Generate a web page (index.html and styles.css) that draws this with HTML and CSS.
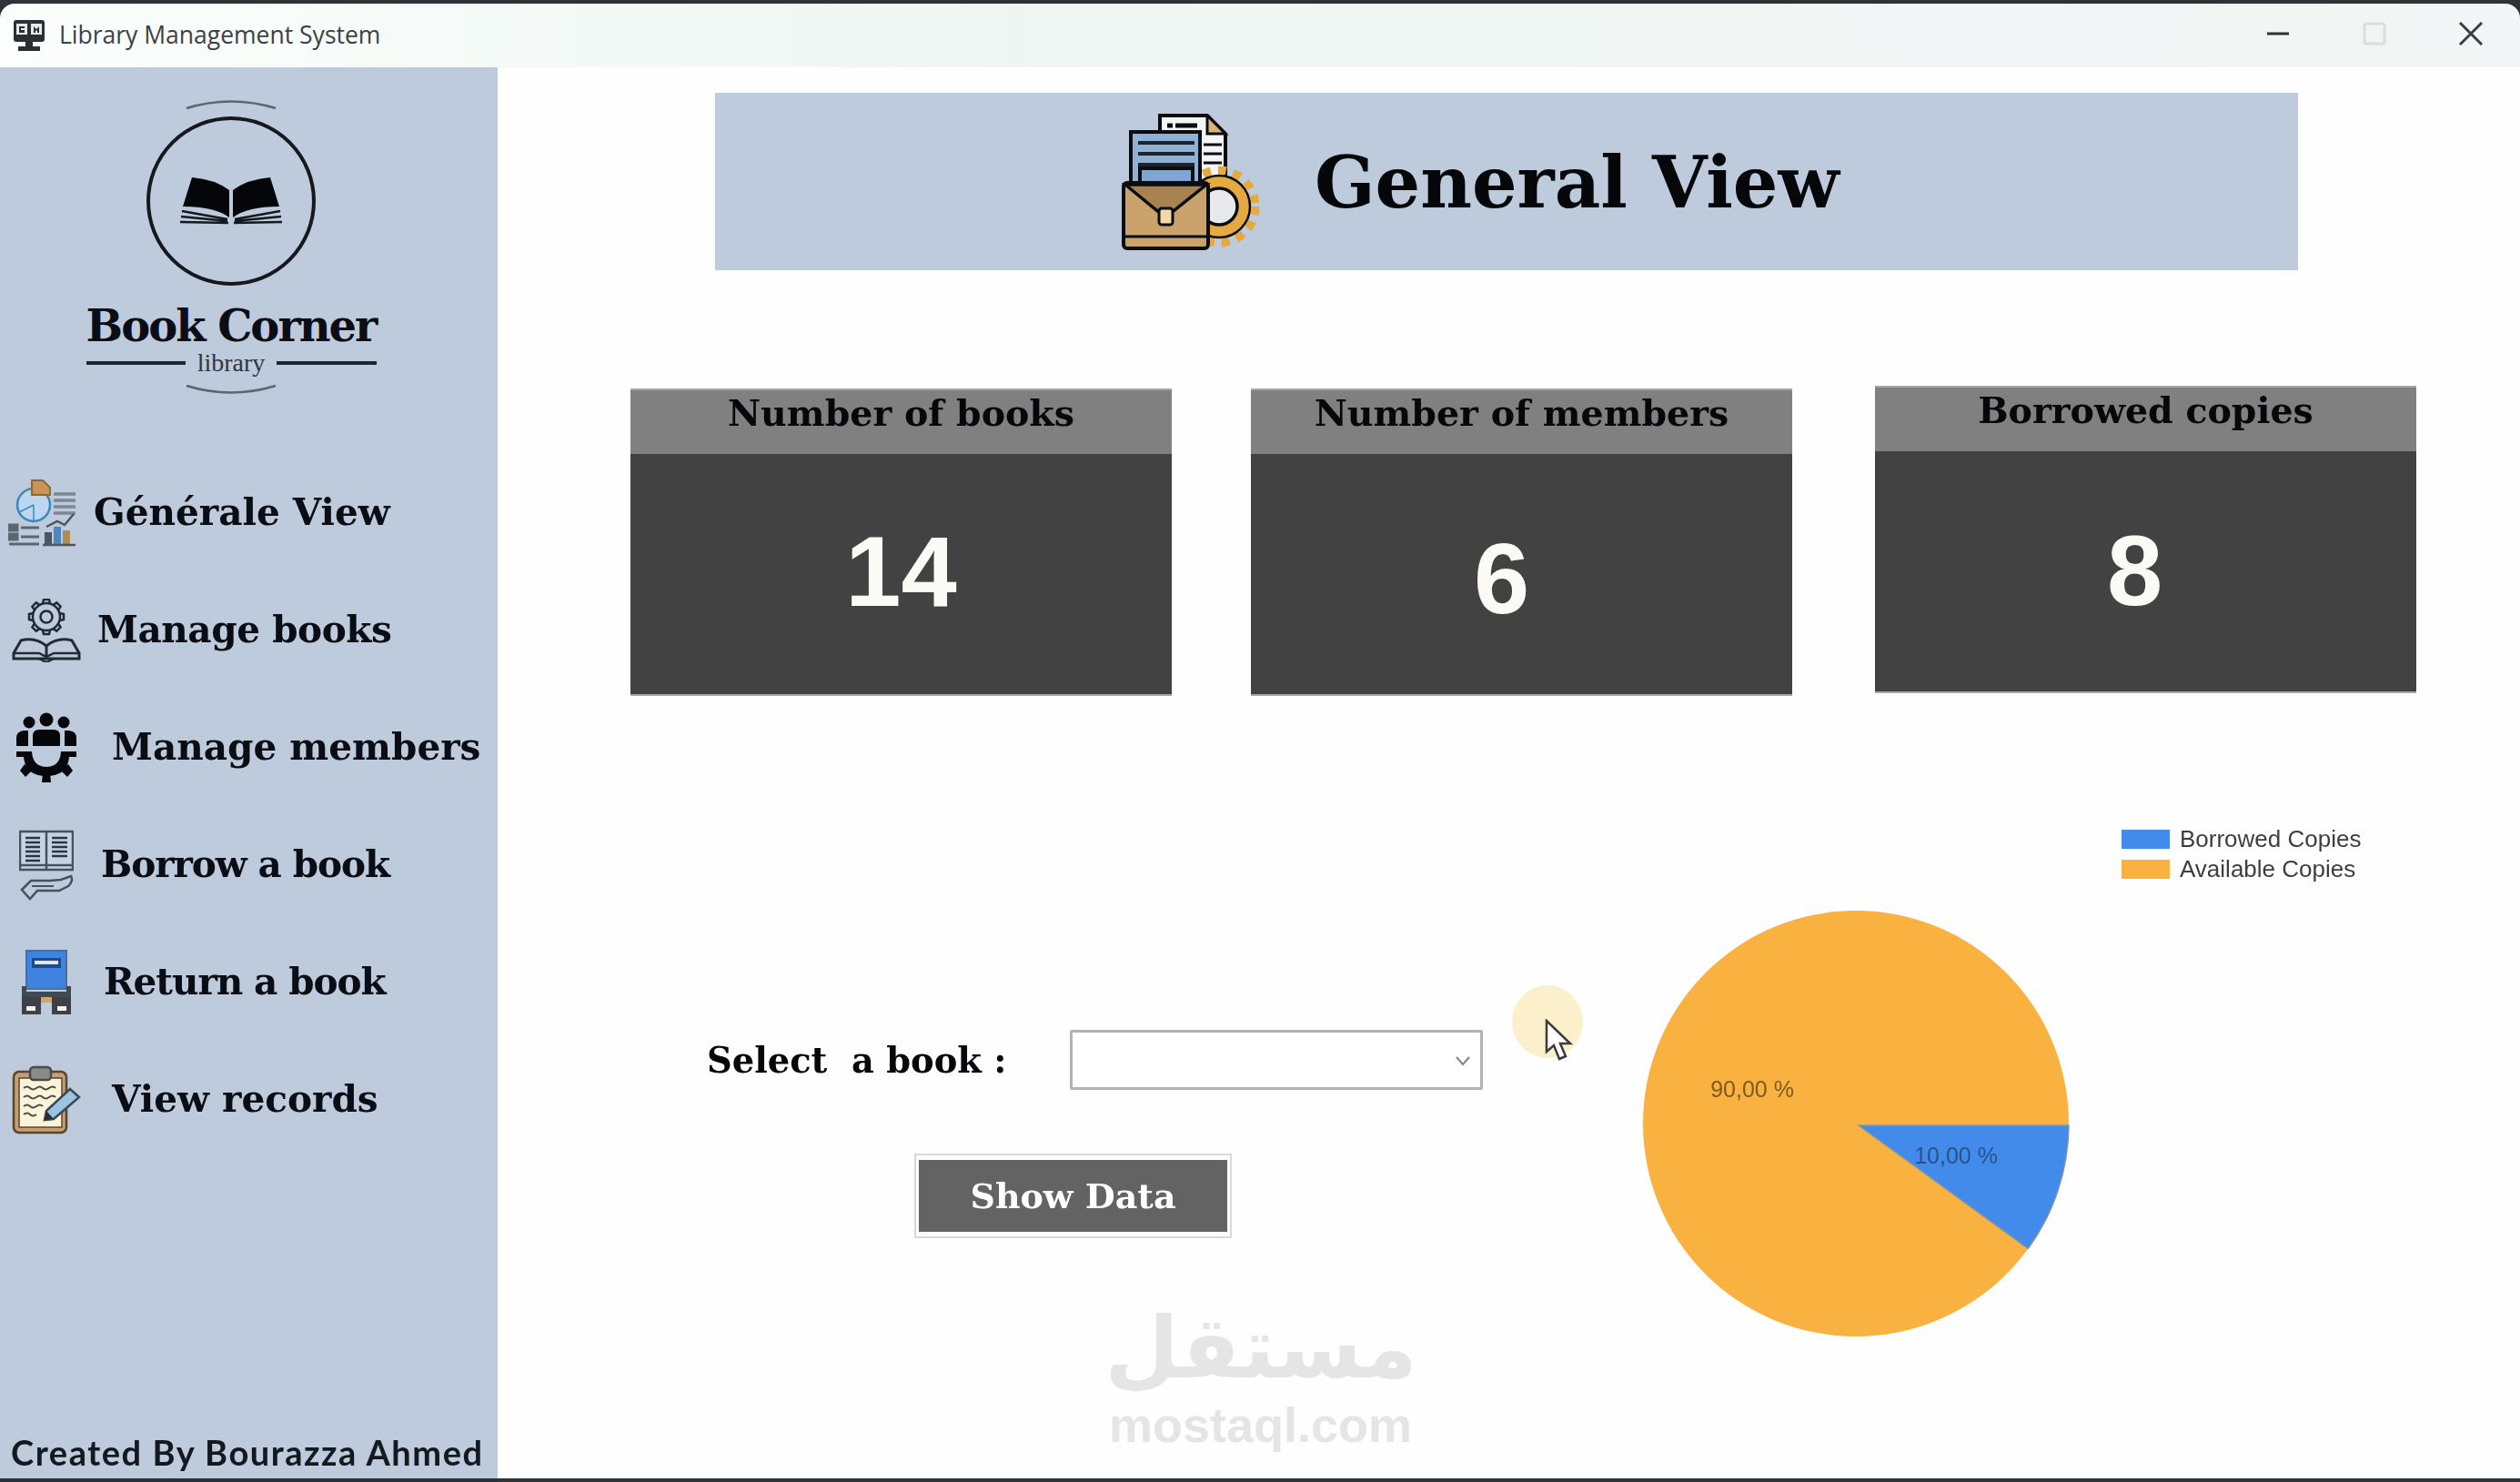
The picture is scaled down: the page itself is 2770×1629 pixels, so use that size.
FILE: index.html
```html
<!DOCTYPE html>
<html lang="en">
<head>
<meta charset="utf-8">
<title>Library Management System</title>
<link rel="stylesheet" href="styles.css">
</head>
<body>
<div class="window">
  <header class="titlebar">
    <svg class="app-icon" viewBox="0 0 36 36" width="36" height="36">
      <rect x="1" y="1" width="34" height="24" rx="3" fill="#2b2f36"/>
      <rect x="4" y="5" width="12" height="12" fill="#e8e8e8"/>
      <rect x="20" y="5" width="12" height="12" fill="#e8e8e8"/>
      <path d="M7 8h6v2H9v2h4v3H7zM23 8l3 3 3-3v7h-2v-3l-1 1-1-1v3h-2z" fill="#2b2f36"/>
      <rect x="14" y="25" width="8" height="6" fill="#2b2f36"/>
      <rect x="6" y="30" width="24" height="5" fill="#2b2f36"/>
    </svg>
    <span class="app-title">Library Management System</span>
    <div class="win-controls">
      <svg class="win-btn" viewBox="0 0 60 30" width="60" height="30"><path d="M18 15H42" stroke="#2b2f36" stroke-width="3"/></svg>
      <svg class="win-btn" viewBox="0 0 60 30" width="60" height="30"><rect x="19" y="4" width="22" height="22" rx="2" fill="none" stroke="#dcdddd" stroke-width="3"/></svg>
      <svg class="win-btn" viewBox="0 0 60 30" width="60" height="30"><path d="M18 3L42 27M42 3L18 27" stroke="#3a3d42" stroke-width="3"/></svg>
    </div>
  </header>

  <div class="content">
    <aside class="sidebar">
      <div class="brand">
        <svg class="brand-mark" viewBox="0 0 200 216" width="200" height="216">
          <path d="M51 14Q100 -1 149 14" fill="none" stroke="#5b6672" stroke-width="2.5"/>
          <circle cx="100" cy="116" r="91" fill="none" stroke="#15181d" stroke-width="4"/>
          <path d="M57 90Q82 92 98 104V134Q82 122 47 122Z" fill="#04060a"/>
          <path d="M143 90Q118 92 102 104V134Q118 122 153 122Z" fill="#04060a"/>
          <path d="M46 127L96 136M45 133L96 138M44 139L97 140M154 127L104 136M155 133L104 138M156 139L103 140" stroke="#15181d" stroke-width="2.5" fill="none"/>
        </svg>
        <div class="brand-name">Book Corner</div>
        <div class="brand-sub"><span class="brand-rule"></span><span class="brand-lib">library</span><span class="brand-rule"></span></div>
        <svg class="brand-arc" viewBox="0 0 100 14" width="100" height="14"><path d="M1 2Q50 17 99 2" fill="none" stroke="#5b6672" stroke-width="2.5"/></svg>
      </div>

      <nav class="nav">
        <a class="nav-row nav-general">
          <svg class="nav-icon" viewBox="0 0 74 74" width="74" height="74">
            <circle cx="28" cy="28" r="18" fill="#bcd8f0" stroke="#3f86bd" stroke-width="2.5"/>
            <path d="M28 28V46M28 28L12 36" stroke="#3f86bd" stroke-width="1.5"/>
            <path d="M26 1H38L46 9V17H26Z" fill="#c99555" stroke="#8a6a40" stroke-width="2"/>
            <path d="M50 16H74M50 23H74M50 30H74M50 37H74" stroke="#7c8791" stroke-width="3.5"/>
            <path d="M1 50H10V56H1ZM1 60H10V66H1ZM14 53H34M14 63H34M1 71H34" stroke="#5c6670" stroke-width="3" fill="#5c6670"/>
            <path d="M42 52L54 46L62 50L72 38" fill="none" stroke="#4c5661" stroke-width="2.5"/>
            <rect x="40" y="58" width="8" height="14" fill="#4c5661"/>
            <rect x="50" y="52" width="8" height="20" fill="#4f86bd"/>
            <rect x="60" y="56" width="8" height="16" fill="#b58b55"/>
            <path d="M38 72H74" stroke="#4c5661" stroke-width="2.5"/>
          </svg>
          <span class="nav-text">Générale View</span>
        </a>
        <a class="nav-row nav-books">
          <svg class="nav-icon" viewBox="0 0 76 70" width="76" height="70">
            <g fill="#bdcbdc" stroke="#222a33" stroke-width="2.5">
              <g id="tooth"><path d="M34 5L35 1H41L42 5"/></g>
              <use href="#tooth" transform="rotate(45 38 20)"/>
              <use href="#tooth" transform="rotate(90 38 20)"/>
              <use href="#tooth" transform="rotate(135 38 20)"/>
              <use href="#tooth" transform="rotate(180 38 20)"/>
              <use href="#tooth" transform="rotate(225 38 20)"/>
              <use href="#tooth" transform="rotate(270 38 20)"/>
              <use href="#tooth" transform="rotate(315 38 20)"/>
              <circle cx="38" cy="20" r="15"/>
              <circle cx="38" cy="20" r="6.5"/>
            </g>
            <path d="M38 52Q26 42 10 46L2 60V66H74V60L66 46Q50 42 38 52V66" fill="none" stroke="#222a33" stroke-width="3"/>
            <path d="M2 60H30L38 64L46 60H74M30 66L38 70L46 66" fill="none" stroke="#222a33" stroke-width="2.5"/>
          </svg>
          <span class="nav-text">Manage books</span>
        </a>
        <a class="nav-row nav-members">
          <svg class="nav-icon" viewBox="0 0 66 77" width="66" height="77">
            <g fill="#05070b">
              <circle cx="14" cy="11" r="6.5"/><circle cx="33" cy="8" r="7.5"/><circle cx="52" cy="11" r="6.5"/>
              <path d="M18 37V26Q18 19 25 19H41Q48 19 48 26V37Z"/>
              <path d="M0 37V28Q0 21 8 20H13V37ZM66 37V28Q66 21 58 20H53V37Z"/>
              <path d="M0 43H17Q18 60 33 60Q48 60 49 43H66V49H58Q56 70 33 70Q10 70 8 49H0Z"/>
              <path d="M29 66H37L38 77H28ZM9 57L17 64L10 71L4 64ZM57 57L49 64L56 71L62 64Z"/>
            </g>
          </svg>
          <span class="nav-text">Manage members</span>
        </a>
        <a class="nav-row nav-borrow">
          <svg class="nav-icon" viewBox="0 0 60 78" width="60" height="78">
            <path d="M1 2H59V44H1ZM30 2V44M1 39H59" fill="#c6d3e2" stroke="#47525e" stroke-width="2.5"/>
            <path d="M7 9H23M7 14H23M7 19H23M7 24H23M7 29H23M7 34H23M36 9H53M36 14H53M36 19H53M36 24H53M36 29H53" stroke="#2c3540" stroke-width="2.5"/>
            <path d="M3 66L13 56H34L46 55L57 51Q60 56 54 62L44 67H20L12 76Z" fill="none" stroke="#47525e" stroke-width="2.5"/>
            <path d="M14 62H38" stroke="#47525e" stroke-width="2"/>
          </svg>
          <span class="nav-text">Borrow a book</span>
        </a>
        <a class="nav-row nav-return">
          <svg class="nav-icon" viewBox="0 0 56 72" width="56" height="72">
            <rect x="6" y="1" width="44" height="42" fill="#3f83e0" stroke="#4a6f9c" stroke-width="2"/>
            <rect x="12" y="9" width="32" height="11" fill="#1f4c86"/>
            <path d="M15 14H41" stroke="#dfe9f5" stroke-width="4"/>
            <path d="M1 40H6V46H50V40H55V52H1Z" fill="#3f4a57"/>
            <rect x="8" y="52" width="40" height="6" fill="#d2a468"/>
            <path d="M1 52H22V71H1ZM34 52H55V71H34Z" fill="#3e4045"/>
            <path d="M6 62H16V67H6ZM40 62H50V67H40Z" fill="#f3f3f3"/>
          </svg>
          <span class="nav-text">Return a book</span>
        </a>
        <a class="nav-row nav-records">
          <svg class="nav-icon" viewBox="0 0 76 76" width="76" height="76">
            <rect x="2" y="7" width="58" height="67" rx="6" fill="#c59f6f" stroke="#5a4630" stroke-width="2.5"/>
            <rect x="8" y="14" width="47" height="54" fill="#fbf3da" stroke="#5a4630" stroke-width="1.5"/>
            <rect x="20" y="2" width="23" height="14" rx="4" fill="#8a8a86" stroke="#4c4a44" stroke-width="2.5"/>
            <path d="M13 25Q17 22 20 25T27 25T34 25T41 25T48 25M13 35Q17 32 20 35T27 35T34 35T41 35T48 35M13 45Q17 42 20 45T27 45T34 45M13 54Q17 51 20 54T27 54" fill="none" stroke="#4b4a46" stroke-width="2"/>
            <path d="M64 26L74 35L46 59L36 60L38 50Z" fill="#9cc3e2" stroke="#3e4853" stroke-width="2.5"/>
            <path d="M38 50L46 59L36 60Z" fill="#2a2d31"/>
          </svg>
          <span class="nav-text">View records</span>
        </a>
      </nav>
      <div class="credit">Created By Bourazza Ahmed</div>
    </aside>

    <main class="main">
      <section class="banner">
        <svg class="banner-icon" viewBox="0 0 152 150" width="152" height="150">
          <path d="M42 2H94L114 22V90H42Z" fill="#f5f5f5" stroke="#0b0d10" stroke-width="4"/>
          <path d="M50 13H84" stroke="#0b0d10" stroke-width="5" stroke-dasharray="6 3 24"/>
          <path d="M94 2L114 22H94Z" fill="#d8b47a" stroke="#0b0d10" stroke-width="3"/>
          <path d="M90 34H110M90 44H110M90 54H110" stroke="#0b0d10" stroke-width="3"/>
          <circle cx="107" cy="102" r="40" fill="none" stroke="#e5a93f" stroke-width="9" stroke-dasharray="9 8"/>
          <circle cx="107" cy="102" r="34" fill="#e5a93f" stroke="#0b0d10" stroke-width="2.5"/>
          <circle cx="107" cy="102" r="20" fill="#e8e9ea" stroke="#0b0d10" stroke-width="3.5"/>
          <rect x="10" y="20" width="76" height="62" fill="#8fb1d6" stroke="#0b0d10" stroke-width="4"/>
          <path d="M18 32H80M18 44H80M18 56H80" stroke="#1d242c" stroke-width="4"/>
          <rect x="20" y="60" width="58" height="22" fill="#7da6d2" stroke="#0b0d10" stroke-width="4"/>
          <rect x="2" y="76" width="93" height="72" rx="4" fill="#c9a26c" stroke="#0b0d10" stroke-width="4"/>
          <path d="M4 78L48 114L93 78Z" fill="#a8824f" stroke="#0b0d10" stroke-width="3.5"/>
          <rect x="41" y="104" width="15" height="18" rx="3" fill="#f2d9a6" stroke="#0b0d10" stroke-width="3"/>
          <path d="M4 135H93" stroke="#0b0d10" stroke-width="3"/>
        </svg>
        <h1 class="banner-title">General View</h1>
      </section>

      <section class="stats">
        <article class="stat">
          <h2 class="stat-head">Number of books</h2>
          <div class="stat-value">14</div>
        </article>
        <article class="stat stat-members">
          <h2 class="stat-head">Number of members</h2>
          <div class="stat-value">6</div>
        </article>
        <article class="stat stat-copies">
          <h2 class="stat-head">Borrowed copies</h2>
          <div class="stat-value">8</div>
        </article>
      </section>

      <section class="lower">
        <div class="controls">
          <div class="picker">
            <label class="picker-label">Select&nbsp; a book :</label>
            <div class="combo">
              <svg viewBox="0 0 18 12" width="18" height="12"><path d="M2 2L9 10L16 2" fill="none" stroke="#808488" stroke-width="2"/></svg>
            </div>
          </div>
          <button class="show-btn">Show Data</button>
        </div>
        <div class="chart">
          <div class="legend">
            <div class="legend-row"><span class="swatch swatch-blue"></span>Borrowed Copies</div>
            <div class="legend-row"><span class="swatch swatch-orange"></span>Available Copies</div>
          </div>
          <svg class="pie" viewBox="0 0 470 470" width="470" height="470">
            <circle cx="235" cy="234" r="234" fill="#f9b13f"/>
            <path d="M238 236H469A234 234 0 0 1 424.3 371.5Z" fill="#428bea" stroke="#8496a8" stroke-width="1.5"/>
            <text class="pie-label pie-label-90" x="121" y="205" text-anchor="middle">90,00 %</text>
            <text class="pie-label pie-label-10" x="345" y="278" text-anchor="middle">10,00 %</text>
          </svg>
        </div>
      </section>
    </main>
  </div>
</div>

<div class="cursor-glow"></div>
<svg class="cursor" viewBox="0 0 32 48" width="32" height="48"><path d="M2 2V36L10 29L16 44L23 41L17 27H28Z" fill="#fff" stroke="#3b3b3b" stroke-width="2.5"/></svg>

<div class="watermark" dir="rtl">
  <div class="wm-ar" lang="ar">مستقل</div>
  <div class="wm-en" dir="ltr">mostaql.com</div>
</div>
</body>
</html>
```

FILE: styles.css
```css
* { box-sizing: border-box; }
html, body { margin: 0; padding: 0; }
body {
  position: relative;
  width: 2770px;
  height: 1629px;
  overflow: hidden;
  background: #2e3338;
  font-family: "DejaVu Serif", serif;
}
.window { padding-top: 4px; height: 1625px; display: flex; flex-direction: column; filter: blur(0.5px); }

.titlebar {
  height: 70px;
  flex: none;
  display: flex;
  align-items: center;
  padding-left: 14px;
  border-radius: 16px 16px 0 0;
  background: linear-gradient(90deg, #fbfefc 0, #eef6f3 40%, #f3f4f5 100%);
}
.app-icon { flex: none; margin-right: 15px; }
.app-title {
  font: 400 26.5px "Open Sans", sans-serif;
  color: #3c4147;
  position: relative;
  top: -1px;
}
.win-controls { margin-left: auto; display: flex; gap: 46px; margin-right: 24px; }
.win-btn { display: block; margin-top: -4px; }

.content { flex: 1; display: flex; background: #fefefe; min-height: 0; }

.sidebar {
  width: 547px;
  flex: none;
  background: #bdcbdc;
  display: flex;
  flex-direction: column;
  color: #0a0d13;
}
.brand { width: 508px; display: flex; flex-direction: column; align-items: center; padding-top: 31px; }
.brand-mark { display: block; }
.brand-name {
  font: 700 48px/1 "DejaVu Serif", serif;
  letter-spacing: -2px;
  margin-top: 13px;
  white-space: nowrap;
}
.brand-sub { display: flex; align-items: center; width: 319px; margin-top: 2px; height: 30px; }
.brand-rule { flex: 1; height: 4px; background: #1d2530; }
.brand-lib { font: 400 28px/1 "Liberation Serif", serif; color: #2e3740; width: 100px; text-align: center; }
.brand-arc { display: block; margin-top: 8px; }

.nav { display: flex; flex-direction: column; margin-top: 63px; }
.nav-row { height: 129px; display: flex; align-items: center; flex: none; }
.nav-icon { display: block; flex: none; }
.nav-text { font: 700 40.6px/1 "DejaVu Serif", serif; white-space: nowrap; color: #0a0d13; }
.nav-general { padding-left: 9px; }
.nav-general .nav-text { margin-left: 20px; }
.nav-books { padding-left: 13px; }
.nav-books .nav-text { margin-left: 18px; letter-spacing: -0.45px; }
.nav-members { padding-left: 18px; }
.nav-members .nav-text { margin-left: 39px; }
.nav-borrow { padding-left: 21px; }
.nav-borrow .nav-text { margin-left: 30px; letter-spacing: -1.1px; }
.nav-return { padding-left: 23px; }
.nav-return .nav-text { margin-left: 35px; letter-spacing: -1.1px; }
.nav-records { padding-left: 13px; }
.nav-records .nav-text { margin-left: 34px; }

.credit {
  margin-top: auto;
  padding: 0 0 5px 12px;
  font: 700 38px/1.2 "Lato", sans-serif;
  letter-spacing: 1.55px;
  color: #14181f;
  white-space: nowrap;
}

.main { flex: 1; min-width: 0; display: flex; flex-direction: column; }
.banner {
  margin: 28px 0 0 239px;
  width: 1740px;
  height: 195px;
  flex: none;
  background: #bdcbdc;
  display: flex;
  align-items: center;
  padding-left: 447px;
}
.banner-icon { display: block; flex: none; }
.banner-title {
  margin: 3px 0 0 60px;
  font: 700 78px/1 "DejaVu Serif", serif;
  color: #05070b;
  white-space: nowrap;
}

.stats { display: flex; margin: 130px 0 0 146px; align-items: flex-start; }
.stat { width: 595px; height: 338px; flex: none; background: #424242; border-bottom: 2px solid #a9a9a9; display: flex; flex-direction: column; }
.stat-members { margin-left: 87px; }
.stat-copies { margin-left: 91px; margin-top: -3px; }
.stat-head {
  margin: 0;
  height: 72px;
  flex: none;
  background: #808080;
  border-top: 2px solid #a6a6a6;
  text-align: center;
  font: 700 39.5px/50px "DejaVu Serif", serif;
  color: #05070b;
  white-space: nowrap;
}
.stat-value {
  flex: 1;
  text-align: center;
  color: #fbfaf4;
  font: 700 110px/1 "Liberation Sans", sans-serif;
  padding-top: 74px;
}
.stat-members .stat-value { padding-right: 44px; padding-top: 82px; }
.stat-copies .stat-value { padding-right: 24px; padding-top: 76px; }

.lower { display: flex; flex: 1; min-height: 0; }
.controls { width: 1258px; flex: none; display: flex; flex-direction: column; }
.picker { display: flex; align-items: center; margin: 367px 0 0 230px; }
.picker-label { width: 399px; flex: none; padding-top: 2px; font: 700 38.4px/1 "DejaVu Serif", serif; color: #05070b; white-space: nowrap; }
.combo {
  width: 454px;
  height: 66px;
  flex: none;
  border: 3px solid #b3b3b3;
  border-radius: 2px;
  background: #fff;
  display: flex;
  align-items: center;
  justify-content: flex-end;
  padding: 2px 10px 0 0;
}
.show-btn {
  margin: 70px 0 0 458px;
  width: 349px;
  height: 93px;
  padding: 0;
  background: #636363;
  border: 4px solid #fdfdfd;
  border-width: 7px 5px;
  outline: 2px solid #d9d9d9;
  outline-offset: -2px;
  color: #fff;
  font: 700 38px/1 "DejaVu Serif", serif;
}

.chart { display: flex; flex-direction: column; flex: none; }
.legend { margin: 141px 0 0 527px; font: 400 26px/33px "Liberation Sans", sans-serif; color: #3b3f44; }
.legend-row { display: flex; align-items: center; white-space: nowrap; }
.swatch { width: 53px; height: 21px; margin-right: 11px; flex: none; }
.swatch-blue { background: #428bea; }
.swatch-orange { background: #f9b13f; }
.pie { display: block; margin-top: 29px; }
.pie-label { font: 400 25px "Liberation Sans", sans-serif; }
.pie-label-90 { fill: #7d5a22; }
.pie-label-10 { fill: #29528a; }

.cursor-glow {
  position: absolute;
  left: 1662px;
  top: 1083px;
  width: 78px;
  height: 80px;
  border-radius: 50%;
  background: #fbf0cb;
}
.cursor { position: absolute; left: 1698px; top: 1120px; }

.watermark {
  position: absolute;
  left: 1219px;
  top: 1425px;
  width: 331px;
  color: #e5e5e5;
  text-align: center;
}
.wm-ar { font: 700 94px/114px "DejaVu Sans", sans-serif; white-space: nowrap; padding-left: 0; margin-right: -8px; }
.wm-en { font: 700 54px/1 "Liberation Sans", sans-serif; margin-top: 0; white-space: nowrap; }
```
